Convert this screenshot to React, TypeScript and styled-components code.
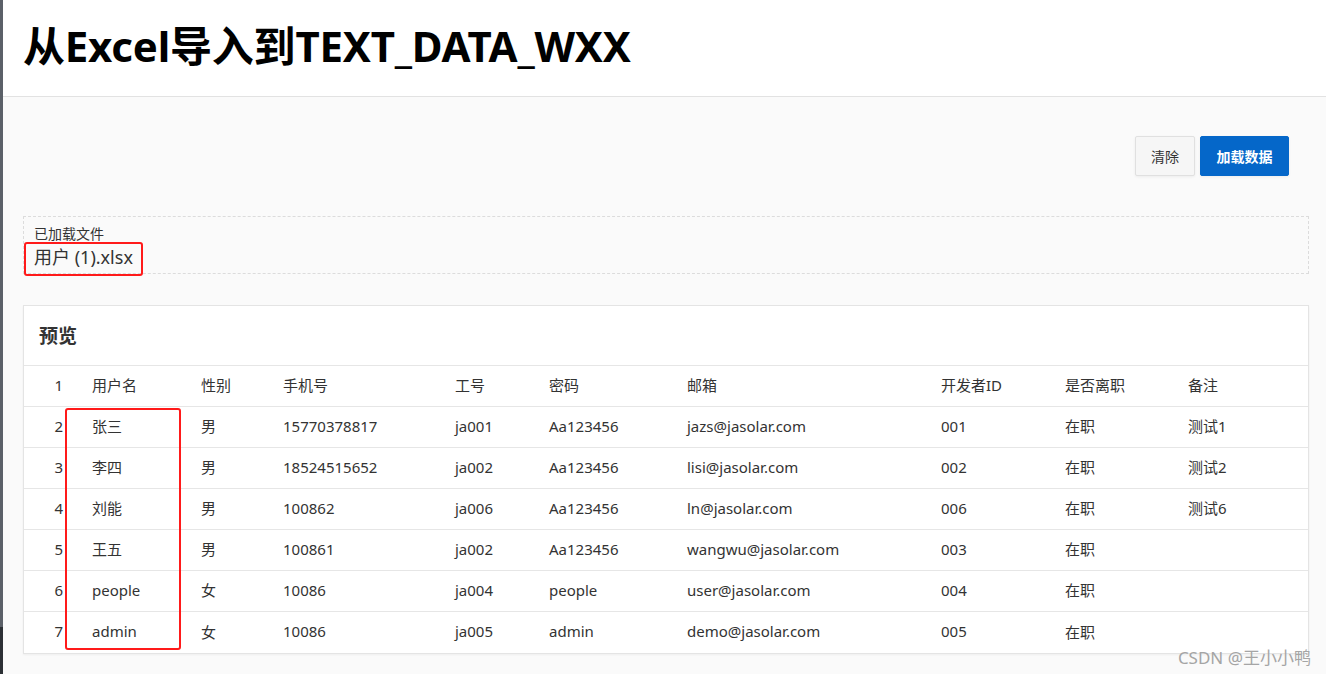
import React from "react";
import styled, { createGlobalStyle } from "styled-components";

const GlobalStyle = createGlobalStyle`
  html, body { margin: 0; padding: 0; }
  body {
    font-family: "Noto Sans", "Noto Sans CJK SC", sans-serif;
    background: #fafafa;
    color: #333;
  }
`;

const Page = styled.div`
  display: flex;
  min-height: 674px;
  position: relative;
  overflow: hidden;
`;

const EdgeStrip = styled.div`
  width: 3px;
  flex: none;
  background: linear-gradient(to bottom, #5b6068 0, #5b6068 627px, #2c3035 627px, #2c3035 100%);
`;

const Main = styled.div`
  flex: 1;
  display: flex;
  flex-direction: column;
  background: #fafafa;
`;

const Header = styled.header`
  height: 97px;
  box-sizing: border-box;
  background: #fff;
  border-bottom: 1px solid #e2e2e2;
  display: flex;
  align-items: center;
  padding: 0 0 9px 20px;
`;

const Title = styled.h1`
  margin: 0;
  font-size: 42px;
  font-weight: 700;
  color: #000;
  letter-spacing: -0.2px;
`;

const Content = styled.div`
  padding: 39px 17px 20px 20px;
  display: flex;
  flex-direction: column;
`;

const Toolbar = styled.div`
  display: flex;
  justify-content: flex-end;
  gap: 5px;
  padding-right: 20px;
`;

const Button = styled.button<{ $primary?: boolean }>`
  height: 40px;
  padding: 0 ${(p) => (p.$primary ? "15.5px" : "15px")};
  font-family: "Noto Sans", "Noto Sans CJK SC", sans-serif;
  font-size: 14px;
  font-weight: ${(p) => (p.$primary ? 700 : 400)};
  color: ${(p) => (p.$primary ? "#fff" : "#333")};
  background: ${(p) => (p.$primary ? "#0567c9" : "#f6f6f6")};
  border: 1px solid ${(p) => (p.$primary ? "#0567c9" : "#e0e0e0")};
  border-radius: 2px;
  box-shadow: 0 1px 3px rgba(0, 0, 0, 0.06);
`;

const FileBox = styled.div`
  margin-top: 40px;
  border: 1px dashed #dcdcdc;
  height: 58px;
  box-sizing: border-box;
  padding: 8px 10px 0 10px;
  display: flex;
  flex-direction: column;
`;

const FileLabel = styled.div`
  font-size: 14px;
  line-height: 18px;
  color: #333;
`;

const FileName = styled.div`
  position: relative;
  margin-top: 2px;
  font-size: 18px;
  line-height: 24px;
  color: #333;
  align-self: flex-start;
`;

const Annotation = styled.div`
  position: absolute;
  border: 2px solid #ff1a1a;
  border-radius: 3px;
  pointer-events: none;
`;

const Card = styled.section`
  margin-top: 31px;
  position: relative;
  background: #fff;
  border: 1px solid #e4e4e4;
  box-shadow: 0 1px 2px rgba(0, 0, 0, 0.05);
`;

const CardTitle = styled.h2`
  margin: 0;
  height: 60px;
  box-sizing: border-box;
  padding: 0 0 2px 15px;
  display: flex;
  align-items: center;
  font-size: 19px;
  font-weight: 700;
  color: #333;
  border-bottom: 1px solid #e6e6e6;
`;

const columns = "57px 109px 82px 172px 94px 138px 254px 124px 123px 1fr";

const Row = styled.div<{ $last?: boolean }>`
  display: grid;
  grid-template-columns: ${columns};
  height: 41px;
  box-sizing: border-box;
  padding-bottom: 3px;
  border-bottom: ${(p) => (p.$last ? "none" : "1px solid #e6e6e6")};
  align-items: center;
  font-size: 15px;
  color: #333;
`;

const IndexCell = styled.div`
  text-align: right;
  padding-right: 18px;
`;

const Cell = styled.div`
  padding-left: 11px;
  white-space: nowrap;
`;

const Watermark = styled.div`
  position: absolute;
  right: 15px;
  bottom: 5px;
  font-size: 17px;
  color: #a5a5a5;
  font-family: "Noto Sans", "Noto Sans CJK SC", sans-serif;
`;

const header = ["用户名", "性别", "手机号", "工号", "密码", "邮箱", "开发者ID", "是否离职", "备注"];

const rows: string[][] = [
  ["张三", "男", "15770378817", "ja001", "Aa123456", "jazs@jasolar.com", "001", "在职", "测试1"],
  ["李四", "男", "18524515652", "ja002", "Aa123456", "lisi@jasolar.com", "002", "在职", "测试2"],
  ["刘能", "男", "100862", "ja006", "Aa123456", "ln@jasolar.com", "006", "在职", "测试6"],
  ["王五", "男", "100861", "ja002", "Aa123456", "wangwu@jasolar.com", "003", "在职", ""],
  ["people", "女", "10086", "ja004", "people", "user@jasolar.com", "004", "在职", ""],
  ["admin", "女", "10086", "ja005", "admin", "demo@jasolar.com", "005", "在职", ""],
];

export default function App() {
  return (
    <>
      <GlobalStyle />
      <Page>
        <EdgeStrip />
        <Main>
          <Header>
            <Title>从Excel导入到TEXT_DATA_WXX</Title>
          </Header>
          <Content>
            <Toolbar>
              <Button>清除</Button>
              <Button $primary>加载数据</Button>
            </Toolbar>
            <FileBox>
              <FileLabel>已加载文件</FileLabel>
              <FileName>
                用户 (1).xlsx
                <Annotation style={{ left: -10, top: -3, width: 115, height: 30 }} />
              </FileName>
            </FileBox>
            <Card>
              <CardTitle>预览</CardTitle>
              <Row>
                <IndexCell>1</IndexCell>
                {header.map((h) => (
                  <Cell key={h}>{h}</Cell>
                ))}
              </Row>
              {rows.map((r, i) => (
                <Row key={i} $last={i === rows.length - 1}>
                  <IndexCell>{i + 2}</IndexCell>
                  {r.map((c, j) => (
                    <Cell key={j}>{c}</Cell>
                  ))}
                </Row>
              ))}
              <Annotation style={{ left: 41, top: 102, width: 112, height: 238 }} />
            </Card>
          </Content>
        </Main>
        <Watermark>CSDN @王小小鸭</Watermark>
      </Page>
    </>
  );
}
